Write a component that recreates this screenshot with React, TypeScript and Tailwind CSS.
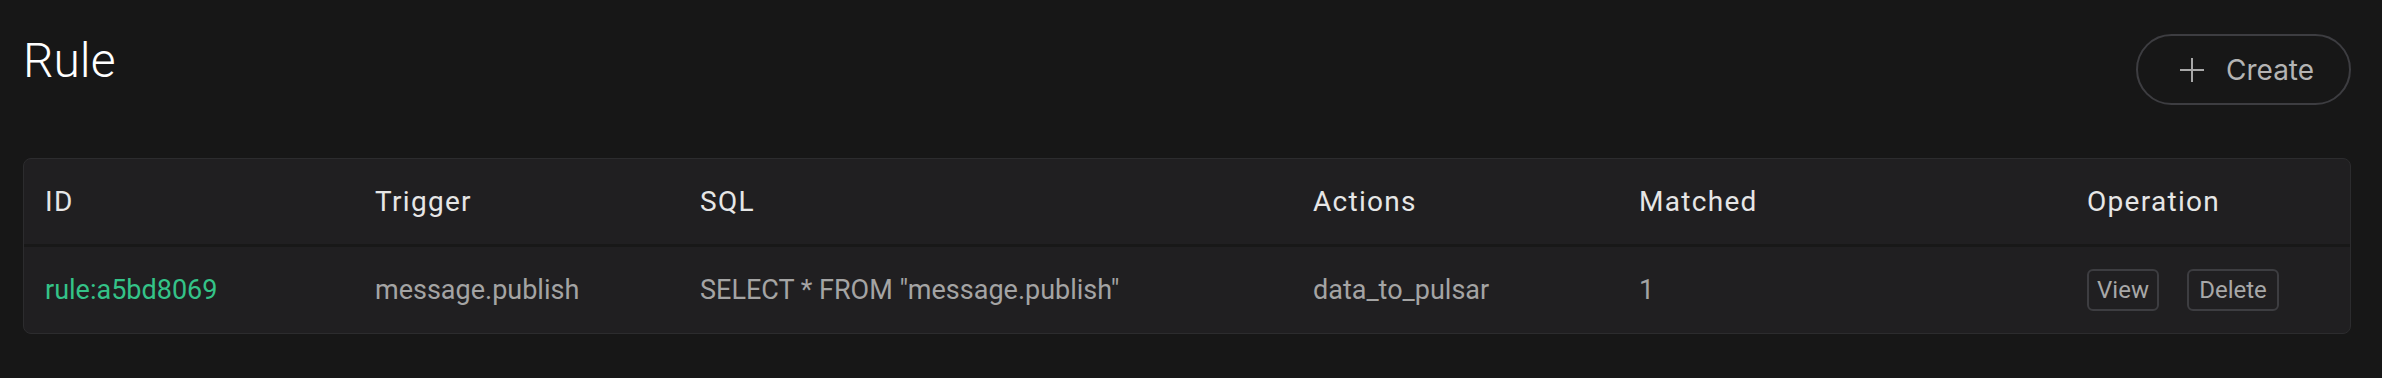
import React from "react";

const cols = "grid grid-cols-[330px_325px_613px_326px_448px_1fr] pl-[21px]";

export default function App() {
  return (
    <div className="min-h-screen bg-[#171717] pl-[23px] pr-[31px] pt-[34px] font-['Roboto',sans-serif]">
      <div className="flex items-start justify-between">
        <h1 className="mt-[3px] text-[48px] font-light leading-none text-white">Rule</h1>
        <button className="flex h-[71px] w-[215px] items-center rounded-full border-2 border-[#3d3d41] pl-[42px] text-[#b4b4b4]">
          <svg width="24" height="24" viewBox="0 0 24 24" className="shrink-0">
            <path d="M12 0v24M0 12h24" stroke="#a8a8a8" strokeWidth="2" fill="none" />
          </svg>
          <span className="ml-[22px] font-['Inter',sans-serif] text-[28px] leading-none">Create</span>
        </button>
      </div>

      <div className="mt-[53px] overflow-hidden rounded-[8px] border border-[#2c2c2e] bg-[#201f21]">
        <div className={`${cols} h-[88px] items-center border-b-[3px] border-[#181818] text-[28px] font-normal tracking-[1.3px] text-[#e6e6e6]`}>
          <div>ID</div>
          <div>Trigger</div>
          <div>SQL</div>
          <div>Actions</div>
          <div>Matched</div>
          <div>Operation</div>
        </div>
        <div className={`${cols} h-[86px] items-center text-[27px] text-[#a4a4a4]`}>
          <div className="text-[#34c388]">rule:a5bd8069</div>
          <div>message.publish</div>
          <div>SELECT * FROM "message.publish"</div>
          <div>data_to_pulsar</div>
          <div>1</div>
          <div className="flex items-center gap-[28px]">
            <button className="h-[42px] w-[72px] rounded-[6px] border-2 border-[#3d3d41] text-[24px] leading-none text-[#a8a8a8]">View</button>
            <button className="h-[42px] w-[92px] rounded-[6px] border-2 border-[#3d3d41] text-[24px] leading-none text-[#a8a8a8]">Delete</button>
          </div>
        </div>
      </div>
    </div>
  );
}
